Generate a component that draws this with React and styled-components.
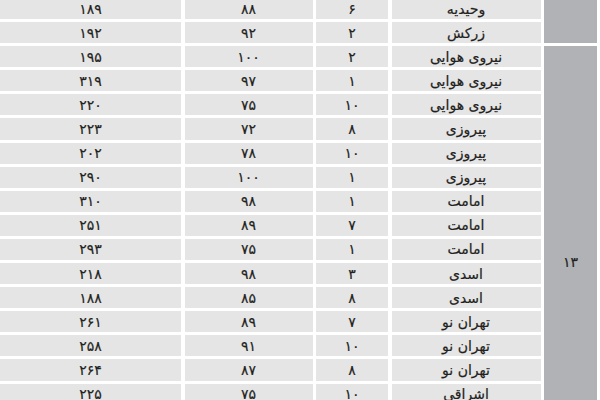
import React from "react";
import styled, { createGlobalStyle } from "styled-components";

const GlobalStyle = createGlobalStyle`
  html, body {
    margin: 0;
    padding: 0;
    background: #fff;
    overflow: hidden;
  }
`;

const groups = [
  {
    label: "",
    span: 2,
    rows: [
      ["وحیدیه", "۶", "۸۸", "۱۸۹"],
      ["زرکش", "۲", "۹۲", "۱۹۲"],
    ],
  },
  {
    label: "۱۳",
    span: 18,
    rows: [
      ["نیروی هوایی", "۲", "۱۰۰", "۱۹۵"],
      ["نیروی هوایی", "۱", "۹۷", "۳۱۹"],
      ["نیروی هوایی", "۱۰", "۷۵", "۲۲۰"],
      ["پیروزی", "۸", "۷۲", "۲۲۳"],
      ["پیروزی", "۱۰", "۷۸", "۲۰۲"],
      ["پیروزی", "۱", "۱۰۰", "۲۹۰"],
      ["امامت", "۱", "۹۸", "۳۱۰"],
      ["امامت", "۷", "۸۹", "۲۵۱"],
      ["امامت", "۱", "۷۵", "۲۹۳"],
      ["اسدی", "۳", "۹۸", "۲۱۸"],
      ["اسدی", "۸", "۸۵", "۱۸۸"],
      ["تهران نو", "۷", "۸۹", "۲۶۱"],
      ["تهران نو", "۱۰", "۹۱", "۲۵۸"],
      ["تهران نو", "۸", "۸۷", "۲۶۴"],
      ["اشراقی", "۱۰", "۷۵", "۲۲۵"],
    ],
  },
];

const Page = styled.div`
  height: 400px;
  overflow: hidden;
  background: #fff;
`;

const Table = styled.div`
  direction: rtl;
  display: grid;
  grid-template-columns: 53px 149px 72px 128px 1fr;
  grid-auto-rows: 21.1px;
  column-gap: 3.5px;
  row-gap: 3px;
  padding-right: 3px;
  margin-top: -2px;
  font-family: "DejaVu Sans", sans-serif;
  font-size: 14px;
  color: #231f20;
`;

const Cell = styled.div`
  background: #e5e5e6;
  display: flex;
  align-items: center;
  justify-content: center;
  white-space: nowrap;
  line-height: 1;
  -webkit-text-stroke: 0.2px #231f20;
`;

const GroupCell = styled.div`
  grid-row: span ${(p) => p.$span};
  background: #b1b2b6;
  display: flex;
  align-items: center;
  justify-content: center;
  font-size: 14px;
  color: #231f20;
  -webkit-text-stroke: 0.2px #231f20;
`;

export default function App() {
  return (
    <Page>
      <GlobalStyle />
      <Table>
        {groups.map((g, gi) => (
          <React.Fragment key={gi}>
            <GroupCell $span={g.span}>{g.label}</GroupCell>
            {g.rows.map((r, ri) => (
              <React.Fragment key={ri}>
                {r.map((v, ci) => (
                  <Cell key={ci}>{v}</Cell>
                ))}
              </React.Fragment>
            ))}
          </React.Fragment>
        ))}
      </Table>
    </Page>
  );
}
